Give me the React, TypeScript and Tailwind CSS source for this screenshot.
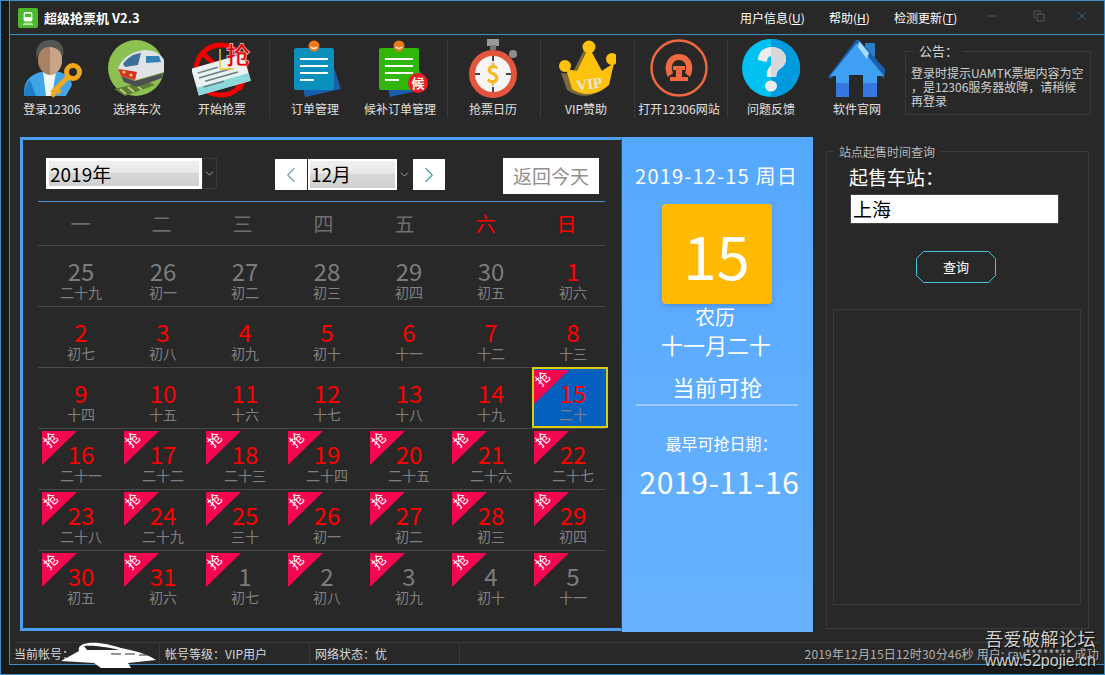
import type { ReactNode } from "react";
import { ChevronDown, ChevronLeft, ChevronRight, Copy, Minus, X } from "lucide-react";

const cjk = "font-['Noto_Sans_CJK_SC','Liberation_Sans',sans-serif]";

function UserIcon() {
  return (
    <svg viewBox="0 0 60 60" className="w-[60px] h-[60px]">
      <path d="M2 57 C1 42 8 36 19 33 L38 33 C46 36 49 40 50 46 L44 57 Z" fill="#3fa5e6" />
      <path d="M2 57 C2 50 4 45 8 41 L14 57 Z" fill="#1f7fc4" />
      <path d="M21 33 L34 33 L30 57 L24 57 Z" fill="#eef6fa" />
      <ellipse cx="28" cy="21" rx="12" ry="15" fill="#a98266" />
      <path d="M28 7 C35 7 40 12 40 21 C40 29 35 36 28 36 Z" fill="#c9a488" />
      <path d="M15 20 C12 6 20 1 29 1 C38 1 43 7 41 18 C38 10 32 8 27 8 C21 8 17 12 15 20 Z" fill="#555553" />
      <g fill="none" stroke="#f2a81d" strokeWidth="5">
        <circle cx="51" cy="33" r="6.5" />
        <path d="M46 38 L30 54 M34 50 L38 54 M30 54 L33 57" />
      </g>
    </svg>
  );
}

function TrainIcon() {
  return (
    <svg viewBox="0 0 60 60" className="w-[60px] h-[60px]">
      <circle cx="29" cy="29" r="28" fill="#8cc152" />
      <path d="M7 50 L40 42 L48 46 L18 57 Z" fill="#5e7d33" />
      <path d="M13 50 L19 55 M21 48 L27 53 M29 46 L35 51" stroke="#b4cf7a" strokeWidth="2" />
      <path d="M14 37 L28 42 L56 34 L55 39 L30 48 L17 43 Z" fill="#4d4f52" />
      <path d="M11 30 C14 20 24 12 38 11 C47 11 54 15 57 21 L57 33 L29 41 L14 37 Z" fill="#dfe3e6" />
      <path d="M11 30 L14 37 L28 41 L30 33 L19 31 Z" fill="#d8322a" />
      <path d="M16 25 C20 19 26 15 34 14 L31 26 L18 28 Z" fill="#3e6f96" />
      <path d="M39 17 L52 17 L54 23 L39 24 Z" fill="#2f83b8" />
      <circle cx="17" cy="33" r="1.6" fill="#f7d34c" />
      <circle cx="24" cy="36" r="1.6" fill="#f7d34c" />
    </svg>
  );
}

function TicketIcon() {
  return (
    <svg viewBox="0 0 60 60" className="w-[60px] h-[60px]">
      <circle cx="29" cy="31" r="25" fill="none" stroke="#f00000" strokeWidth="5" />
      <path d="M9 13 L50 50" stroke="#f00000" strokeWidth="5" />
      <g transform="rotate(-16 28 36)">
        <rect x="2" y="22" width="54" height="28" fill="#e8f2f0" />
        <rect x="2" y="42" width="54" height="8" fill="#8bd8dc" />
        <path d="M7 28 H28 M7 33 H40 M12 38 H46 M9 43 H30" stroke="#6a7d80" strokeWidth="1.5" />
      </g>
      <path d="M28 10 V30 H42" fill="none" stroke="#f2c230" strokeWidth="1.5" />
      <text x="46" y="25" textAnchor="middle" fontSize="24" fontWeight="700" fill="#e80000" stroke="#fff" strokeWidth="0.5" className={cjk}>
        抢
      </text>
    </svg>
  );
}

function NoteIcon({ front, badge }: { front: string; badge?: boolean }) {
  return (
    <svg viewBox="0 0 60 60" className="w-[60px] h-[60px]">
      <path d="M34 14 L44 14 L56 50 L20 58 L16 40 Z" fill="#1a5fae" />
      <rect x="9" y="9" width="40" height="42" rx="2" fill={front} />
      <path d="M15 20 H43 M15 27 H43 M15 34 H43 M15 41 H29" stroke="#fff" strokeWidth="2" />
      <circle cx="29" cy="7" r="5.5" fill="#f07a1c" />
      <path d="M26 8 C28 10 30 10 32 8" stroke="#fff" strokeWidth="1.5" fill="none" />
      {badge && (
        <>
          <circle cx="48" cy="44" r="10" fill="#ee1c25" />
          <text x="48" y="49" textAnchor="middle" fontSize="13" fontWeight="700" fill="#fff" className={cjk}>
            候
          </text>
        </>
      )}
    </svg>
  );
}

function WatchIcon() {
  return (
    <svg viewBox="0 0 60 60" className="w-[60px] h-[60px]">
      <rect x="24" y="0" width="12" height="7" fill="#9a9a9a" />
      <rect x="27" y="6" width="6" height="5" fill="#777" />
      <circle cx="50" cy="15" r="4" fill="#8e8e8e" />
      <circle cx="30" cy="35" r="24" fill="#e4553d" />
      <circle cx="30" cy="35" r="18" fill="#f6f6f6" />
      <path d="M30 17 V22 M30 48 V53 M12 35 H17 M43 35 H48" stroke="#444" strokeWidth="2" />
      <text x="30" y="44" textAnchor="middle" fontSize="24" fontWeight="700" fill="#f6b81f" className={cjk}>
        $
      </text>
    </svg>
  );
}

function CrownIcon() {
  return (
    <svg viewBox="0 0 60 60" className="w-[60px] h-[60px]">
      <path d="M8 33 L14 50 C26 58 40 58 50 48 L56 26 L44 34 L31 10 L19 34 Z" fill="#7b6a3c" transform="translate(-3 1)" />
      <path d="M10 30 L16 50 C28 58 42 56 53 46 L58 24 L46 32 L33 8 L21 32 Z" fill="#fcc20e" />
      <circle cx="33" cy="8" r="6.5" fill="#fcc20e" />
      <circle cx="9" cy="27" r="6" fill="#fcc20e" />
      <circle cx="56" cy="20" r="6" fill="#fcc20e" />
      <text x="34" y="50" textAnchor="middle" fontSize="15" fontWeight="700" fill="#e8e8e0" transform="rotate(-8 34 50)" className="font-['Liberation_Serif',serif]">
        VIP
      </text>
    </svg>
  );
}

function RailIcon() {
  return (
    <svg viewBox="0 0 60 60" className="w-[60px] h-[60px]">
      <circle cx="30" cy="29" r="27.5" fill="none" stroke="#ee6a3e" strokeWidth="2.5" />
      <path d="M19 38 C13 27 19 15 30 15 C41 15 47 27 41 38 L36 34 C39 27 36 21 30 21 C24 21 21 27 24 34 Z" fill="#ee6a3e" />
      <path d="M24 27 H36 V31 H33 V38 H39 V42 H21 V38 H27 V31 H24 Z" fill="#ee6a3e" />
    </svg>
  );
}

function HelpIcon() {
  return (
    <svg viewBox="0 0 60 60" className="w-[60px] h-[60px]">
      <circle cx="30" cy="29" r="29" fill="#00c1f0" />
      <path d="M30 0 A29 29 0 0 1 30 58 Z" fill="#009ade" />
      <path d="M17 21 C17 12 24 8 31 8 C39 8 45 13 45 20 C45 27 39 29 36 33 L35 38 H26 C25 30 29 27 33 24 C36 21 34 17 31 17 C27 17 26 20 26 23 Z" fill="#ececec" />
      <path d="M30 8 C39 8 45 13 45 20 C45 27 39 29 36 33 L35 38 H30 Z" fill="#d8d8dc" />
      <ellipse cx="30" cy="47" rx="6" ry="5.5" fill="#ececec" />
    </svg>
  );
}

function HomeIcon() {
  return (
    <svg viewBox="0 0 60 60" className="w-[60px] h-[60px]">
      <rect x="38" y="4" width="10" height="16" fill="#2b7fc4" />
      <path d="M29 1 L1 38 L4 40 L30 8 L57 40 L58 30 L32 1 Z" fill="#1c5fae" />
      <path d="M30 4 L57 37 L50 37 L50 58 L36 58 L36 36 L22 36 L22 58 L9 58 L9 37 L3 37 Z" fill="#3f9ff2" />
      <path d="M9 44 H50 V58 H36 V44 H22 V58 H9 Z" fill="#3478e0" />
      <path d="M32 2 L42 14 L40 20 L31 8 Z" fill="#a8dcfa" />
    </svg>
  );
}

type Tool =
  | { label: string; w: number; icon: ReactNode }
  | { divider: number };

const tools: Tool[] = [
  { label: "登录12306", w: 82, icon: <UserIcon /> },
  { label: "选择车次", w: 88, icon: <TrainIcon /> },
  { label: "开始抢票", w: 82, icon: <TicketIcon /> },
  { divider: 6 },
  { label: "订单管理", w: 90, icon: <NoteIcon front="#0b8fbd" /> },
  { label: "候补订单管理", w: 80, icon: <NoteIcon front="#2fb70a" badge /> },
  { divider: 7 },
  { label: "抢票日历", w: 90, icon: <WatchIcon /> },
  { divider: 2 },
  { label: "VIP赞助", w: 90, icon: <CrownIcon /> },
  { divider: 3 },
  { label: "打开12306网站", w: 88, icon: <RailIcon /> },
  { divider: 4 },
  { label: "问题反馈", w: 86, icon: <HelpIcon /> },
  { label: "软件官网", w: 86, icon: <HomeIcon /> },
];

type Day = { n: number; lunar: string; on?: boolean; grab?: boolean; today?: boolean };

const weeks: Day[][] = [
  [
    { n: 25, lunar: "二十九" },
    { n: 26, lunar: "初一" },
    { n: 27, lunar: "初二" },
    { n: 28, lunar: "初三" },
    { n: 29, lunar: "初四" },
    { n: 30, lunar: "初五" },
    { n: 1, lunar: "初六", on: true },
  ],
  [
    { n: 2, lunar: "初七", on: true },
    { n: 3, lunar: "初八", on: true },
    { n: 4, lunar: "初九", on: true },
    { n: 5, lunar: "初十", on: true },
    { n: 6, lunar: "十一", on: true },
    { n: 7, lunar: "十二", on: true },
    { n: 8, lunar: "十三", on: true },
  ],
  [
    { n: 9, lunar: "十四", on: true },
    { n: 10, lunar: "十五", on: true },
    { n: 11, lunar: "十六", on: true },
    { n: 12, lunar: "十七", on: true },
    { n: 13, lunar: "十八", on: true },
    { n: 14, lunar: "十九", on: true },
    { n: 15, lunar: "二十", on: true, grab: true, today: true },
  ],
  [
    { n: 16, lunar: "二十一", on: true, grab: true },
    { n: 17, lunar: "二十二", on: true, grab: true },
    { n: 18, lunar: "二十三", on: true, grab: true },
    { n: 19, lunar: "二十四", on: true, grab: true },
    { n: 20, lunar: "二十五", on: true, grab: true },
    { n: 21, lunar: "二十六", on: true, grab: true },
    { n: 22, lunar: "二十七", on: true, grab: true },
  ],
  [
    { n: 23, lunar: "二十八", on: true, grab: true },
    { n: 24, lunar: "二十九", on: true, grab: true },
    { n: 25, lunar: "三十", on: true, grab: true },
    { n: 26, lunar: "初一", on: true, grab: true },
    { n: 27, lunar: "初二", on: true, grab: true },
    { n: 28, lunar: "初三", on: true, grab: true },
    { n: 29, lunar: "初四", on: true, grab: true },
  ],
  [
    { n: 30, lunar: "初五", on: true, grab: true },
    { n: 31, lunar: "初六", on: true, grab: true },
    { n: 1, lunar: "初七", grab: true },
    { n: 2, lunar: "初八", grab: true },
    { n: 3, lunar: "初九", grab: true },
    { n: 4, lunar: "初十", grab: true },
    { n: 5, lunar: "十一", grab: true },
  ],
];

const weekdays = ["一", "二", "三", "四", "五", "六", "日"];

function DayCell({ day }: { day: Day }) {
  return (
    <div className="relative h-[60px] flex flex-col items-center pt-[12px]">
      {day.today && <div className="absolute left-0 top-[-1px] w-[76px] h-[61px] bg-[#0560bd] border-2 border-[#d8cf0a]" />}
      {day.grab && (
        <div className="absolute left-[2px] top-[2px] w-[35px] h-[34px] bg-[#f5074f] [clip-path:polygon(0_0,100%_0,0_100%)]">
          <span className="absolute left-[1px] top-[-1px] text-[14px] leading-[18px] text-white -rotate-45">抢</span>
        </div>
      )}
      <div className={`relative text-[24px] leading-[26px] ${day.on ? "text-[#ff0000]" : "text-[#7c7c7c]"}`}>{day.n}</div>
      <div className="relative text-[14px] leading-[16px] text-[#808080]">{day.lunar}</div>
    </div>
  );
}

function App() {
  return (
    <div className={`relative w-[1105px] h-[675px] overflow-hidden bg-[#191919] border border-[#3a8fc8] flex flex-col ${cjk}`}>
      <div className="flex-1 ml-[8px] mb-[9px] border-l border-b border-[#3a8fc8] bg-[#282828] flex flex-col">
        {/* title bar */}
        <div className="h-[34px] shrink-0 border-b border-[#3a8fc8] flex items-center text-white">
          <div className="ml-[8px] w-[20px] h-[20px] rounded-[2px] bg-[#4cb82c] flex items-center justify-center">
            <svg viewBox="0 0 16 16" className="w-[14px] h-[16px]">
              <rect x="3" y="1" width="10" height="11" rx="2" fill="#fff" />
              <rect x="4.5" y="3" width="7" height="4" fill="#4cb82c" />
              <path d="M3 14 H13 M2 15.5 H14" stroke="#d8f2cc" strokeWidth="1" />
            </svg>
          </div>
          <div className="ml-[6px] text-[13px] font-bold">超级抢票机 V2.3</div>
          <div className="ml-auto text-[12px] flex">
            <span className="w-[89px]">
              用户信息(<u>U</u>)
            </span>
            <span className="w-[65px]">
              帮助(<u>H</u>)
            </span>
            <span className="w-[76px]">
              检测更新(<u>T</u>)
            </span>
          </div>
          <div className="flex items-center text-[#3a8fc8] mr-[15px] -mt-[4px]">
            <Minus className="w-[14px] h-[14px] ml-[15px]" strokeWidth={1} />
            <Copy className="w-[12px] h-[12px] ml-[34px] text-[#888]" strokeWidth={1} />
            <X className="w-[14px] h-[14px] ml-[30px]" strokeWidth={1} />
          </div>
        </div>

        {/* toolbar */}
        <div className="h-[102px] shrink-0 flex items-start pl-[1px] pt-[4px] text-[12px] text-[#e0e0e0]">
          {tools.map((t, i) =>
            "divider" in t ? (
              <div key={i} className="w-[1px] h-[78px] mt-[1px] bg-[#3a3a3a] shrink-0" style={{ marginLeft: t.divider }} />
            ) : (
              <div key={i} className="flex flex-col items-center shrink-0" style={{ width: t.w }}>
                {t.icon}
                <div className="mt-[2px] leading-[16px] whitespace-nowrap">{t.label}</div>
              </div>
            ),
          )}
          <div className="relative ml-[5px] mt-[12px] w-[186px] h-[64px] border border-[#3a3a3a] px-[5px] pt-[14px] text-[12px] leading-[14px] text-[#d0d0d0] whitespace-nowrap">
            <span className="absolute left-[8px] top-[-9px] bg-[#282828] px-[5px] text-[13px] leading-[16px]">公告：</span>
            <div>登录时提示UAMTK票据内容为空</div>
            <div>，是12306服务器故障，请稍候</div>
            <div>再登录</div>
          </div>
        </div>

        {/* main */}
        <div className="flex items-start pl-[10px]">
          <div className="w-[602px] h-[494px] border-[3px] border-r-[1px] border-[#4a9df0] border-r-[#444] bg-[#282828] pl-[15px]">
            <div className="h-[61px] flex items-start pt-[18px]">
              <div className="ml-[8px] w-[156px] h-[31px] border-[3px] border-white bg-[linear-gradient(#f0f0f0_0%,#e8e8e8_45%,#d8d8d8_50%,#d0d0d0_100%)] text-[19px] leading-[25px] text-black pl-[1px]">
                2019年
              </div>
              <div className="w-[15px] h-[31px] border border-[#3a3a3a] flex items-center justify-center text-white">
                <ChevronDown className="w-[13px] h-[13px]" strokeWidth={1} />
              </div>
              <div className="ml-[58px] mt-[1px] w-[32px] h-[31px] bg-white flex items-center justify-center text-[#7a9aa8]">
                <ChevronLeft className="w-[26px] h-[26px]" strokeWidth={1} />
              </div>
              <div className="ml-[1px] mt-[1px] w-[89px] h-[31px] border-[2px] border-white bg-[linear-gradient(#f0f0f0_0%,#e8e8e8_45%,#d8d8d8_50%,#d0d0d0_100%)] text-[19px] leading-[26px] text-black pl-[1px]">
                12月
              </div>
              <div className="w-[15px] h-[31px] mt-[1px] flex items-center justify-center text-white">
                <ChevronDown className="w-[13px] h-[13px]" strokeWidth={1} />
              </div>
              <div className="ml-[1px] mt-[1px] w-[32px] h-[31px] bg-white flex items-center justify-center text-[#3d9aa8]">
                <ChevronRight className="w-[26px] h-[26px]" strokeWidth={1} />
              </div>
              <div className="ml-[58px] w-[96px] h-[36px] bg-white text-[19px] leading-[36px] text-center text-[#909090]">返回今天</div>
            </div>
            <div className="w-[567px] h-[45px] pl-[2px] border-t border-b border-b-[#4a4a4a] border-t-[#4a90d0] grid grid-cols-[repeat(7,81px)]">
              {weekdays.map((w, i) => (
                <div key={w} className={`text-center text-[20px] leading-[43px] ${i > 4 ? "text-[#ff0000]" : "text-[#6e6e6e]"}`}>
                  {w}
                </div>
              ))}
            </div>
            {weeks.map((week, i) => (
              <div key={i} className={`w-[567px] h-[61px] ${i < 5 ? "border-b border-[#4a4a4a]" : ""}`}>
                <div className="w-[574px] ml-[2px] grid grid-cols-[repeat(7,82px)]">
                  {week.map((d, j) => (
                    <DayCell key={j} day={d} />
                  ))}
                </div>
              </div>
            ))}
          </div>

          <div className="w-[191px] h-[495px] pr-[2px] bg-gradient-to-b from-[#55a8ff] to-[#68b2ff] flex flex-col items-center text-white">
            <div className="mt-[24px] text-[20px] leading-[30px] whitespace-nowrap tracking-[1.2px]">2019-12-15 周日</div>
            <div className="mt-[13px] w-[110px] h-[100px] rounded-[4px] bg-[#ffb900] shadow-md flex items-center justify-center text-[60px]">15</div>
            <div className="text-[20px] leading-[26px] -ml-[3px]">农历</div>
            <div className="text-[22px] leading-[28px] -ml-[1px]">十一月二十</div>
            <div className="mt-[13px] ml-[2px] text-[22px] leading-[30px] tracking-[0.5px]">当前可抢</div>
            <div className="mt-[3px] w-[162px] h-[2px] bg-[#9dcbff]" />
            <div className="mt-[26px] ml-[10px] text-[16px] leading-[22px]">最早可抢日期：</div>
            <div className="mt-[9px] ml-[6px] text-[30px] leading-[36px] whitespace-nowrap tracking-[0.6px]">2019-11-16</div>
          </div>

          <div className="relative ml-[13px] mt-[14px] w-[263px] h-[478px] border border-[#3a3a3a] px-[6px] pt-[12px]">
            <span className="absolute left-[7px] top-[-8px] bg-[#282828] px-[5px] text-[12px] leading-[16px] text-[#b8b8b8]">站点起售时间查询</span>
            <div className="ml-[16px] text-[19px] leading-[26px] text-white">起售车站：</div>
            <div className="ml-[17px] mt-[4px] w-[209px] h-[30px] bg-white border border-[#444] pl-[2px] text-[19px] leading-[28px] text-black">上海</div>
            <div className="relative ml-[83px] mt-[27px] w-[80px] h-[32px] flex items-center justify-center text-[13px] text-white">
              <svg viewBox="0 0 80 32" className="absolute inset-0 w-[80px] h-[32px]">
                <path d="M7.5 .5 H72.5 L79.5 7.5 V24.5 L72.5 31.5 H7.5 L.5 24.5 V7.5 Z" fill="none" stroke="#45c6d8" />
              </svg>
              查询
            </div>
            <div className="mt-[26px] w-[248px] h-[296px] border border-[#3a3a3a]" />
          </div>
        </div>

        {/* status bar */}
        <div className="mt-auto mx-[4px] h-[22px] border-t border-[#3a3a3a] flex items-center text-[12px] text-[#d8d8d8] whitespace-nowrap">
          <div className="w-[146px] h-full border-r border-[#3a3a3a] leading-[22px]">当前帐号：</div>
          <div className="w-[150px] h-full border-r border-[#3a3a3a] pl-[5px] leading-[22px]">帐号等级：VIP用户</div>
          <div className="w-[150px] h-full border-r border-[#3a3a3a] pl-[5px] leading-[22px]">网络状态：优</div>
          <div className="ml-auto pr-[1px] text-[12px] tracking-[0.2px] text-[#b0b0b0]">2019年12月15日12时30分46秒 用户: rav******** 成功</div>
        </div>
      </div>

      {/* scribbled-out account name */}
      <svg viewBox="0 0 96 30" className="absolute left-[60px] top-[639px] w-[96px] h-[30px]">
        <path d="M0 21 L18 11 C17 7 19 4 28 3 C38 2 50 5 60 8 C76 11 88 15 95 20 L67 23 L70 28 L40 28 L33 23 Z" fill="#fff" />
        <path d="M23 6 C32 5 46 7 58 10 L26 10 Z" fill="#282828" />
        <path d="M50 14 H60 M64 14 H74 M78 15 H86" stroke="#282828" strokeWidth="1" />
      </svg>

      {/* forum watermark */}
      <div className="absolute right-[8px] top-[625px] text-right text-[#d0d0d0] [text-shadow:1px_1px_1px_#000]">
        <div className="text-[18px] leading-[24px] tracking-[0.5px]">吾爱破解论坛</div>
        <div className="text-[16px] leading-[22px] font-['Liberation_Sans',sans-serif]">www.52pojie.cn</div>
      </div>
    </div>
  );
}

export default App;
